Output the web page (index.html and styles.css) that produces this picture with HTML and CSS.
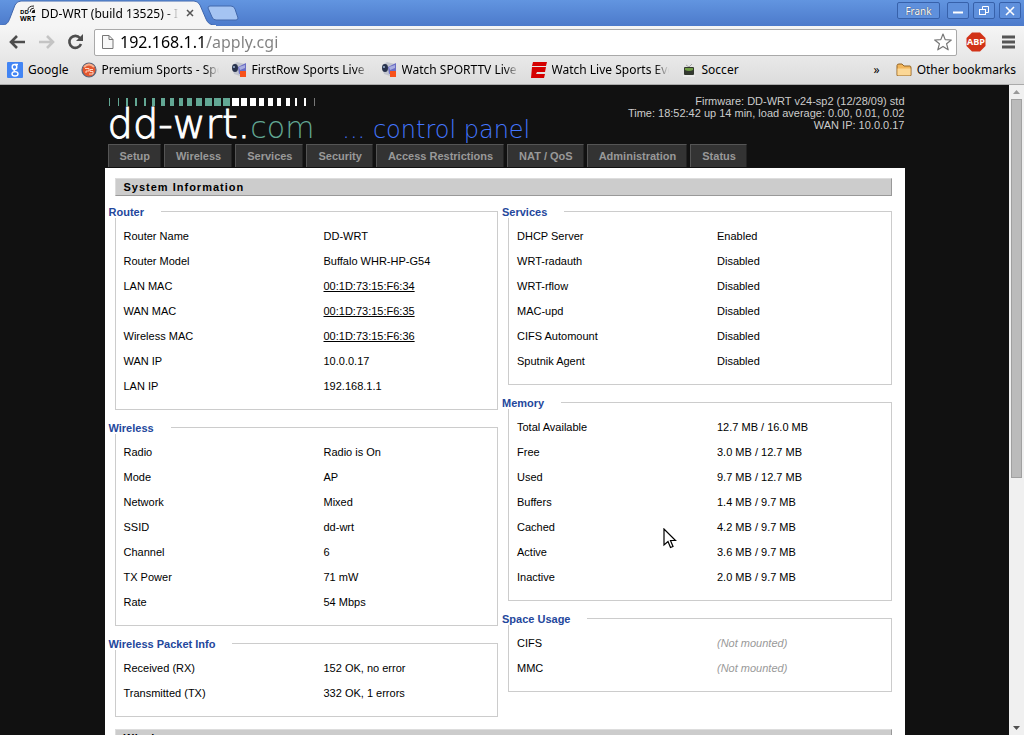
FILE: index.html
```html
<!DOCTYPE html>
<html lang="en">
<head>
    <meta charset="utf-8">
    <title>DD-WRT (build 13525) - Info</title>
    <meta name="viewport" content="width=device-width, initial-scale=1">
    <link rel="stylesheet" href="styles.css">
</head>
<body>

<!-- browser window -->
<div class="titlebar">
    <div class="tab">
        <svg class="tab-shape" width="216" height="26" viewBox="0 0 216 26" aria-hidden="true">
            <path d="M0 25.500C7 25 8 23 10 18L15 5Q17 1 21 1H194Q198 1 200 5L206 19Q208 25 216 25.500V26H0Z" fill="#f5f5f5" stroke="#3f66ad"/>
            <path d="M0 26H216" stroke="#f5f5f5" stroke-width="2"/>
        </svg>
        <svg class="tab-icon" width="16" height="16" viewBox="0 0 16 16" aria-hidden="true">
            <g fill="none" stroke="#222" stroke-width="1">
                <path d="M8 5Q8 1 14 1M10 7Q10 3 14 3M12 8Q12 5 15 5"/>
                <path d="M14 5v2h-2" stroke-width="2"/>
            </g>
            <text x="0" y="9" font-size="6">DD</text>
            <text x="0" y="16" font-size="7">WRT</text>
        </svg>
        <span class="tab-title">DD-WRT (build 13525) - I</span>
        <button class="tab-close" aria-label="Close tab">
            <svg width="8" height="8" viewBox="0 0 8 8"><path d="M1 1L7 7M7 1L1 7" stroke="#555" stroke-width="1.500"/></svg>
        </button>
    </div>
    <button class="new-tab" aria-label="New tab">
        <svg width="32" height="16" viewBox="0 0 32 16"><path d="M3 1H24Q27 1 28 4L31 13Q31 15 29 15H9Q6 15 5 12L1 3Q1 1 3 1Z" fill="#a5c4f2" stroke="#4268ac"/></svg>
    </button>
    <div class="window-buttons">
        <button class="user">Frank</button>
        <button aria-label="Minimize"><svg width="12" height="12" viewBox="0 0 12 12"><path d="M1 7.500H11" stroke="#fff" stroke-width="2"/></svg></button>
        <button aria-label="Restore"><svg width="12" height="12" viewBox="0 0 12 12"><g fill="none" stroke="#fff"><path d="M4.500 1.500H10.500V7.500H7.500M4.500 1.500V4"/><rect x="1.500" y="4.500" width="6" height="5"/></g></svg></button>
        <button aria-label="Close"><svg width="12" height="12" viewBox="0 0 12 12"><path d="M2 2L10 10M10 2L2 10" stroke="#fff" stroke-width="1.600"/></svg></button>
    </div>
</div>

<div class="toolbar">
    <button aria-label="Back"><svg width="17" height="14" viewBox="0 0 17 14"><path d="M8 1L2 7L8 13M2 7H16" fill="none" stroke="#4d4d4d" stroke-width="2.600"/></svg></button>
    <button aria-label="Forward"><svg width="17" height="14" viewBox="0 0 17 14"><path d="M9 1L15 7L9 13M15 7H1" fill="none" stroke="#c4c4c4" stroke-width="2.600"/></svg></button>
    <button aria-label="Reload"><svg width="17" height="16" viewBox="0 0 17 16"><path d="M13 4A6 6 0 1 0 14 10" fill="none" stroke="#4d4d4d" stroke-width="2.600"/><path d="M16 0V7H9Z" fill="#4d4d4d"/></svg></button>
    <form class="address">
        <svg width="13" height="16" viewBox="0 0 13 16" aria-hidden="true"><path d="M1.500 1.500H8L12 5.500V14.500H1.500Z" fill="#f8f8f8" stroke="#777"/><path d="M8 1.500V5.500H12" fill="none" stroke="#777"/></svg>
        <input type="text" aria-label="Address" value="192.168.1.1/apply.cgi">
        <button type="button" aria-label="Bookmark this page"><svg width="18" height="18" viewBox="0 0 18 18"><path d="M9 1L11.200 6.600L17.300 7L12.600 10.800L14.200 16.800L9 13.400L3.800 16.800L5.400 10.800L.7 7L6.800 6.600Z" fill="#fff" stroke="#777" stroke-width="1.200" stroke-linejoin="round"/></svg></button>
    </form>
    <button class="adblock" aria-label="AdBlock Plus"><svg width="20" height="20" viewBox="0 0 20 20"><path d="M6 .5H14L19.500 6V14L14 19.500H6L.5 14V6Z" fill="#d23318"/><text x="10" y="13" text-anchor="middle" font-size="9" font-weight="bold" fill="#fff">ABP</text></svg></button>
    <button class="menu" aria-label="Menu"><svg width="13" height="14" viewBox="0 0 13 14"><path d="M0 2H13M0 7H13M0 12H13" stroke="#555" stroke-width="3"/></svg></button>
</div>

<nav class="bookmarks">
    <a href="#" class="bm-google">
        <svg width="16" height="16" viewBox="0 0 16 16"><rect width="16" height="16" rx="1" fill="#4285f4"/><g fill="none" stroke="#fff" stroke-width="1.400"><ellipse cx="7.500" cy="5" rx="2.300" ry="2.500"/><path d="M8 2.500H11M8 7.500Q6 8.500 8 9.500"/><ellipse cx="8" cy="11.800" rx="3" ry="2.200"/></g></svg>
        <span>Google</span></a>
    <a href="#" class="bm-premium">
        <svg width="16" height="16" viewBox="0 0 16 16"><circle cx="8" cy="8" r="7" fill="#e4572e" stroke="#56657c" stroke-width="1.200"/><path d="M3 5Q8 0 13 5" fill="none" stroke="#f9b08d" stroke-width="2"/><path d="M4 6.500H8V9H5V11M12 7.500H9V9.500H12V12H8" fill="none" stroke="#ffd5c2"/></svg>
        <span class="fade">Premium Sports - Spo</span></a>
    <a href="#" class="bm-firstrow">
        <svg width="16" height="16" viewBox="0 0 16 16"><path d="M1 3L6 0L14 2L15 10L9 14L3 12Z" fill="#c3c6cf"/><path d="M7 5L15 1V10L8 12Z" fill="#6a6dc4"/><path d="M8 5L14 3V6L9 8Z" fill="#a9aee0"/><ellipse cx="4" cy="6" rx="3" ry="4" fill="#28324c"/><circle cx="3" cy="5" r="1" fill="#9cb6d5"/><path d="M9 9H15V15H9Z" fill="#f7521b"/></svg>
        <span class="fade">FirstRow Sports Live F</span></a>
    <a href="#" class="bm-sporttv">
        <svg width="16" height="16" viewBox="0 0 16 16"><path d="M1 3L6 0L14 2L15 10L9 14L3 12Z" fill="#c3c6cf"/><path d="M7 5L15 1V10L8 12Z" fill="#6a6dc4"/><path d="M8 5L14 3V6L9 8Z" fill="#a9aee0"/><ellipse cx="4" cy="6" rx="3" ry="4" fill="#28324c"/><circle cx="3" cy="5" r="1" fill="#9cb6d5"/><path d="M9 9H15V15H9Z" fill="#f7521b"/></svg>
        <span class="fade">Watch SPORTTV Live</span></a>
    <a href="#" class="bm-espn">
        <svg width="16" height="16" viewBox="0 0 16 16"><path d="M2 0H16L15 4H1ZM1 5H15L14 10H6L5 12H14L13 16H0Z" fill="#d50000"/></svg>
        <span class="fade">Watch Live Sports Eve</span></a>
    <a href="#" class="bm-soccer">
        <svg width="16" height="16" viewBox="0 0 16 16"><path d="M5 3L8 5L11 2" fill="none" stroke="#a6a6a6"/><rect x="3" y="5" width="10" height="8" rx="1" fill="#33382f"/><path d="M4 6H12V8Q8 10 4 8Z" fill="#6f9c45"/><path d="M2 14H14" stroke="#f6f6f6"/></svg>
        <span>Soccer</span></a>
    <button class="more" aria-label="More bookmarks">»</button>
    <a href="#" class="bm-other">
        <svg width="16" height="14" viewBox="0 0 16 14"><path d="M1 12.500V2.500Q1 1 3 1H6L8 3H14Q15 3 15 5V12.500Z" fill="#f2b65b" stroke="#946425"/><path d="M1.500 12.500V5.500H14.500V12.500Z" fill="#fbd796"/></svg>
        <span>Other bookmarks</span></a>
</nav>

<div class="viewport">
    <main class="page">
        <div class="wrapper">
            <header class="header">
                <div class="brand">
                    <svg class="bars" width="208" height="8" viewBox="0 0 208 8" aria-hidden="true">
                        <path fill="#62a794" d="M1 0h1v8H1zM10 0h1v8h-1zM18 0h2v8h-2zM27 0h2v8h-2zM36 0h2v8h-2zM44 0h3v8h-3zM53 0h4v8h-4zM62 0h4v8h-4zM71 0h4v8h-4zM79 0h5v8h-5zM88 0h6v8h-6zM97 0h7v8h-7zM106 0h7v8h-7zM115 0h7v8h-7z"/>
                        <path fill="#fff" d="M124 0h7v8h-7zM133 0h6v8h-6zM142 0h6v8h-6zM151 0h5v8h-5zM160 0h5v8h-5zM169 0h4v8h-4zM178 0h4v8h-4zM187 0h2v8h-2zM196 0h2v8h-2z"/>
                        <path fill="#777" d="M206 0h1v8h-1z"/>
                    </svg>
                    <div class="logo-line">
                        <a class="logo" href="#">dd-wrt.<span>com</span></a>
                        <span class="slogan">... control panel</span>
                    </div>
                </div>
                <div class="info">
                    <div>Firmware: DD-WRT v24-sp2 (12/28/09) std</div>
                    <div>Time: 18:52:42 up 14 min, load average: 0.00, 0.01, 0.02</div>
                    <div>WAN IP: 10.0.0.17</div>
                </div>
            </header>

            <nav class="menu-main">
                <a href="#">Setup</a>
                <a href="#">Wireless</a>
                <a href="#">Services</a>
                <a href="#">Security</a>
                <a href="#">Access Restrictions</a>
                <a href="#">NAT / QoS</a>
                <a href="#">Administration</a>
                <a href="#">Status</a>
            </nav>

            <div class="contents">
                <h2>System Information</h2>
                <div class="columns">
                    <div class="col">
                        <fieldset>
                            <legend>Router</legend>
                            <dl>
                                <dt>Router Name</dt><dd>DD-WRT</dd>
                                <dt>Router Model</dt><dd>Buffalo WHR-HP-G54</dd>
                                <dt>LAN MAC</dt><dd><a href="#">00:1D:73:15:F6:34</a></dd>
                                <dt>WAN MAC</dt><dd><a href="#">00:1D:73:15:F6:35</a></dd>
                                <dt>Wireless MAC</dt><dd><a href="#">00:1D:73:15:F6:36</a></dd>
                                <dt>WAN IP</dt><dd>10.0.0.17</dd>
                                <dt>LAN IP</dt><dd>192.168.1.1</dd>
                            </dl>
                        </fieldset>
                        <fieldset>
                            <legend>Wireless</legend>
                            <dl>
                                <dt>Radio</dt><dd>Radio is On</dd>
                                <dt>Mode</dt><dd>AP</dd>
                                <dt>Network</dt><dd>Mixed</dd>
                                <dt>SSID</dt><dd>dd-wrt</dd>
                                <dt>Channel</dt><dd>6</dd>
                                <dt>TX Power</dt><dd>71 mW</dd>
                                <dt>Rate</dt><dd>54 Mbps</dd>
                            </dl>
                        </fieldset>
                        <fieldset>
                            <legend>Wireless Packet Info</legend>
                            <dl>
                                <dt>Received (RX)</dt><dd>152 OK, no error</dd>
                                <dt>Transmitted (TX)</dt><dd>332 OK, 1 errors</dd>
                            </dl>
                        </fieldset>
                    </div>
                    <div class="col">
                        <fieldset>
                            <legend>Services</legend>
                            <dl>
                                <dt>DHCP Server</dt><dd>Enabled</dd>
                                <dt>WRT-radauth</dt><dd>Disabled</dd>
                                <dt>WRT-rflow</dt><dd>Disabled</dd>
                                <dt>MAC-upd</dt><dd>Disabled</dd>
                                <dt>CIFS Automount</dt><dd>Disabled</dd>
                                <dt>Sputnik Agent</dt><dd>Disabled</dd>
                            </dl>
                        </fieldset>
                        <fieldset>
                            <legend>Memory</legend>
                            <dl>
                                <dt>Total Available</dt><dd>12.7 MB / 16.0 MB</dd>
                                <dt>Free</dt><dd>3.0 MB / 12.7 MB</dd>
                                <dt>Used</dt><dd>9.7 MB / 12.7 MB</dd>
                                <dt>Buffers</dt><dd>1.4 MB / 9.7 MB</dd>
                                <dt>Cached</dt><dd>4.2 MB / 9.7 MB</dd>
                                <dt>Active</dt><dd>3.6 MB / 9.7 MB</dd>
                                <dt>Inactive</dt><dd>2.0 MB / 9.7 MB</dd>
                            </dl>
                        </fieldset>
                        <fieldset>
                            <legend>Space Usage</legend>
                            <dl>
                                <dt>CIFS</dt><dd class="off">(Not mounted)</dd>
                                <dt>MMC</dt><dd class="off">(Not mounted)</dd>
                            </dl>
                        </fieldset>
                    </div>
                </div>
                <h2>Wireless</h2>
            </div>
        </div>
    </main>
    <div class="scrollbar">
        <button aria-label="Scroll up"><svg width="7" height="4" viewBox="0 0 7 4"><path d="M0 4L3.500 0L7 4Z" fill="#999"/></svg></button>
        <div class="track"><div class="thumb"></div></div>
        <button aria-label="Scroll down"><svg width="7" height="4" viewBox="0 0 7 4"><path d="M0 0L3.500 4L7 0Z" fill="#505050"/></svg></button>
    </div>
</div>

<svg class="pointer" width="14" height="22" viewBox="0 0 14 22" aria-hidden="true">
    <path d="M1 1V17L5 13.500L7.500 19.500L10 18.500L7.500 12.500H12.500Z" fill="#fff" stroke="#000" stroke-width="1.200"/>
</svg>

</body>
</html>
```
FILE: styles.css
```css
* {
    box-sizing: border-box;
}

html, body {
    height: 100%;
    margin: 0;
    padding: 0;
    overflow: hidden;
}

body {
    display: flex;
    flex-direction: column;
    background: #111;
    font-family: "Noto Sans", sans-serif;
    font-size: 12px;
}

button {
    display: flex;
    align-items: center;
    justify-content: center;
    margin: 0;
    padding: 0;
    border: 0;
    background: none;
    font-family: inherit;
}

svg {
    display: block;
    flex: none;
}

/* browser window */

.titlebar {
    display: flex;
    flex: none;
    height: 26px;
    background: linear-gradient(#6295e0, #4c7acb);
}

.tab {
    position: relative;
    display: flex;
    align-items: center;
    width: 216px;
    padding-left: 20px;
}

.tab-shape {
    position: absolute;
    left: 0;
    top: 0;
}

.tab-icon, .tab-title, .tab-close {
    position: relative;
}

.tab-icon {
    overflow: visible;
    font-family: "Open Sans", sans-serif;
    font-weight: bold;
}

.tab-title {
    width: 138px;
    margin-left: 5px;
    overflow: hidden;
    white-space: nowrap;
    -webkit-mask-image: linear-gradient(to right, #000 90%, transparent);
    mask-image: linear-gradient(to right, #000 90%, transparent);
}

.tab-close {
    width: 22px;
    height: 16px;
}

.new-tab {
    margin-left: -9px;
}

.window-buttons {
    display: flex;
    gap: 4px;
    margin: 2px 3px 5px auto;
}

.window-buttons button {
    width: 22px;
    height: 17px;
    border: 1px solid #3761aa;
    border-radius: 2px;
    background: #5f90dc;
}

.window-buttons .user {
    width: 43px;
    margin-right: 3px;
    color: #fff;
    font-size: 10px;
    text-shadow: 0 0 1px #222;
}

.toolbar {
    display: flex;
    flex: none;
    align-items: center;
    gap: 12px;
    height: 32px;
    padding: 0 9px;
    background: linear-gradient(#f5f5f5, #e8e8e8);
}

.address {
    display: flex;
    flex: 1;
    align-items: center;
    gap: 6px;
    height: 27px;
    margin-right: -2px;
    margin-left: -2px;
    padding: 0 4px 0 6px;
    border: 1px solid #a9a9a9;
    border-radius: 2px;
    background: #fff;
}

.address input {
    flex: 1;
    min-width: 0;
    padding: 0;
    border: 0;
    outline: 0;
    background: linear-gradient(to right, #000 84px, #808080 84px);
    -webkit-background-clip: text;
    background-clip: text;
    color: transparent;
    font-family: "Noto Sans", sans-serif;
    font-size: 16px;
}

.adblock {
    margin-left: -1px;
    font-family: "Open Sans", sans-serif;
}

.menu {
    margin-left: 4px;
}

.bookmarks {
    display: flex;
    flex: none;
    align-items: center;
    height: 27px;
    padding: 0 8px 3px 7px;
    border-bottom: 1px solid #aaa;
    background: linear-gradient(#e8e8e8, #dcdcdc);
}

.bookmarks a {
    display: flex;
    align-items: center;
    gap: 5px;
    margin-right: 12px;
    color: #000;
    text-decoration: none;
    white-space: nowrap;
}

.bookmarks .fade {
    width: 117px;
    overflow: hidden;
    -webkit-mask-image: linear-gradient(to right, #000 88%, transparent);
    mask-image: linear-gradient(to right, #000 88%, transparent);
}

.bookmarks .more {
    margin-left: auto;
    margin-right: 16px;
    font-size: 12px;
}

.bookmarks .bm-other {
    margin-right: 0;
}

.viewport {
    display: flex;
    flex: 1;
    min-height: 0;
}

/* router page */

.page {
    flex: 1;
    min-width: 0;
    overflow: hidden;
    font-family: "Liberation Sans", Arial, sans-serif;
    font-size: 11px;
    color: #000;
}

.wrapper {
    max-width: 800px;
    margin: 0 auto;
}

.header {
    display: flex;
    justify-content: space-between;
    height: 59px;
    padding-left: 3px;
}

.brand {
    padding-top: 13px;
}

.logo-line {
    display: flex;
    align-items: baseline;
    gap: 28px;
    height: 36px;
    line-height: 36px;
    font-family: "DejaVu Sans", sans-serif;
    font-weight: 200;
    white-space: nowrap;
}

.logo {
    color: #fff;
    font-size: 40px;
    text-decoration: none;
    -webkit-text-stroke: 1px;
}

.logo span {
    color: #62a794;
    font-size: 30px;
    -webkit-text-stroke: 0;
}

.slogan {
    color: #47f;
    font-size: 24px;
}

.info {
    padding-top: 10px;
    color: #ccc;
    line-height: 12px;
    text-align: right;
}

.menu-main {
    display: flex;
    gap: 3px;
    height: 24px;
    padding-left: 3px;
}

.menu-main a {
    height: 23px;
    padding: 0 10px 0 11px;
    border: 1px solid #555;
    border-right-color: #222;
    border-bottom: 0;
    background: #333;
    color: #999;
    font-weight: bold;
    line-height: 23px;
    text-decoration: none;
}

.contents {
    padding: 10px 13px 20px 10px;
    background: #fff;
}

h2 {
    height: 18px;
    margin: 0;
    padding-left: 8px;
    border: 1px solid #999;
    border-top-color: #ddd;
    border-left-color: #ddd;
    background: #ccc;
    font-size: 11px;
    line-height: 16px;
    letter-spacing: 1px;
}

.columns {
    display: grid;
    grid-template-columns: 1fr 1fr;
    gap: 10px;
    margin: 9px 0 12px;
}

.col {
    display: flex;
    flex-direction: column;
    gap: 11px;
}

fieldset {
    min-width: 0;
    margin: 0;
    padding: 6px 8px 10px;
    border: 1px solid #ccc;
}

legend {
    height: 13px;
    margin-left: -15px;
    padding: 0 17px 0 0;
    background: #fff;
    color: #24479c;
    font-weight: bold;
    line-height: 14px;
}

dl {
    display: grid;
    grid-template-columns: 200px 1fr;
    margin: 0;
    line-height: 25px;
}

dd {
    margin: 0;
}

dd a {
    color: #000;
}

.off {
    color: #999;
    font-style: italic;
}

.scrollbar {
    display: flex;
    flex: none;
    flex-direction: column;
    width: 15px;
    background: #f0f0f0;
}

.scrollbar button {
    width: 15px;
    height: 14px;
}

.track {
    flex: 1;
    padding: 0 2px;
}

.thumb {
    height: 61%;
    border: 1px solid #a0a0a0;
    background: #bbb;
}

/* mouse pointer over the page */

.pointer {
    position: absolute;
    left: 663px;
    top: 528px;
}
```
